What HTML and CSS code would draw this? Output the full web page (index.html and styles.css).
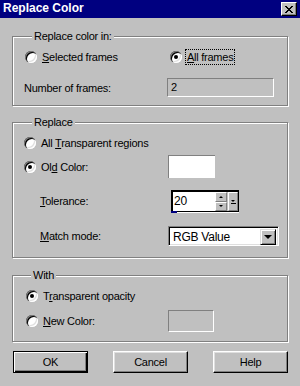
FILE: index.html
```html
<!DOCTYPE html>
<html lang="en">
<head>
    <meta charset="UTF-8">
    <meta name="viewport" content="width=device-width, initial-scale=1.0">
    <title>Replace Color</title>
    <link rel="stylesheet" href="styles.css">
</head>
<body>
    <div class="window">
        <div class="titlebar">
            <span class="title">Replace Color</span>
            <span class="close">
                <svg width="8" height="7" viewBox="0 0 8 7"><path d="M0 0h2v1h-2zM6 0h2v1h-2zM1 1h2v1h-2zM5 1h2v1h-2zM2 2h4v1h-4zM3 3h2v1h-2zM2 4h4v1h-4zM1 5h2v1h-2zM5 5h2v1h-2zM0 6h2v1h-2zM6 6h2v1h-2z" fill="#000"/></svg>
            </span>
        </div>

        <div class="dialog">
            <div class="group group-in">
                <div class="legend">Replace color in:</div>
                <div class="row row-first">
                    <label class="opt opt-wide"><span class="radio"></span><span><u>S</u>elected frames</span></label>
                    <label class="opt"><span class="radio on"></span><span class="focus"><u>A</u>ll frames</span></label>
                </div>
                <div class="row row-count">
                    <span class="label label-count">Number of frames:</span>
                    <span class="field field-count">2</span>
                </div>
            </div>

            <div class="group group-replace">
                <div class="legend">Replace</div>
                <div class="row row-first">
                    <label class="opt"><span class="radio"></span><span>All <u>T</u>ransparent regions</span></label>
                </div>
                <div class="row row-old">
                    <label class="opt opt-old"><span class="radio on"></span><span>Ol<u>d</u> Color:</span></label>
                    <span class="swatch"></span>
                </div>
                <div class="row row-tol">
                    <span class="label label-indent label-tol"><u>T</u>olerance:</span>
                    <div class="spin">
                        <span class="spin-text">20</span>
                        <span class="spin-arrows">
                            <span class="spin-btn"><i class="tri-up"></i></span>
                            <span class="spin-btn"><i class="tri-down"></i></span>
                        </span>
                        <span class="spin-drop"><i class="tri-down"></i><i class="bar"></i></span>
                        <span class="spin-mark"></span>
                    </div>
                </div>
                <div class="row row-match">
                    <span class="label label-indent label-match"><u>M</u>atch mode:</span>
                    <div class="select">
                        <span class="select-text">RGB Value</span>
                        <span class="select-btn"><i class="tri-big"></i></span>
                    </div>
                </div>
            </div>

            <div class="group group-with">
                <div class="legend">With</div>
                <div class="row row-first">
                    <label class="opt"><span class="radio on"></span><span>T<u>r</u>ansparent opacity</span></label>
                </div>
                <div class="row row-new">
                    <label class="opt opt-new"><span class="radio"></span><span><u>N</u>ew Color:</span></label>
                    <span class="field field-new"></span>
                </div>
            </div>

            <div class="buttons">
                <button class="btn default">OK</button>
                <button class="btn">Cancel</button>
                <button class="btn">Help</button>
            </div>
        </div>
    </div>
</body>
</html>
```

FILE: styles.css
```css
body {
    margin: 0;
    background: #c0c0c0;
    font-family: "Liberation Sans", Arial, sans-serif;
    font-size: 11px;
    letter-spacing: -0.25px;
    color: #000;
}
.window {
    width: 300px;
    height: 386px;
    background: #c0c0c0;
    overflow: hidden;
}
.titlebar {
    height: 18px;
    background: #000080;
    display: flex;
    align-items: flex-start;
    justify-content: space-between;
}
.title {
    color: #fff;
    font-weight: bold;
    font-size: 12px;
    letter-spacing: 0;
    line-height: 17px;
    padding-left: 3px;
}
.close {
    width: 16px;
    height: 14px;
    margin: 2px 3px 0 0;
    box-sizing: border-box;
    background: #c0c0c0;
    border-top: 1px solid #fff;
    border-left: 1px solid #fff;
    border-right: 1px solid #000;
    border-bottom: 1px solid #000;
    box-shadow: inset -1px -1px 0 #808080;
    display: flex;
    align-items: center;
    justify-content: center;
}
.dialog {
    padding: 18px 12px 0 12px;
}
.group {
    box-sizing: border-box;
    border: 1px solid #808080;
    box-shadow: inset 1px 1px 0 #fff, 1px 1px 0 #fff;
    padding-left: 12px;
}
.group-in {
    height: 70px;
}
.group-replace {
    height: 136px;
    margin-top: 16px;
    padding-left: 11px;
}
.group-with {
    height: 67px;
    margin-top: 17px;
    padding-left: 13px;
}
.legend {
    width: fit-content;
    height: 13px;
    line-height: 13px;
    margin: -7px 0 -6px 7px;
    padding: 0 2px;
    background: #c0c0c0;
}
.group-replace .legend {
    margin-left: 8px;
}
.group-with .legend {
    margin-left: 5px;
}
.row {
    display: flex;
    align-items: center;
}
.row-first {
    height: 20px;
    margin-top: 10px;
}
.row-count {
    height: 19px;
    margin-top: 11px;
}
.row-old {
    height: 23px;
    margin-top: 2px;
}
.row-tol {
    height: 22px;
    margin-top: 12px;
}
.row-match {
    height: 20px;
    margin-top: 14px;
}
.row-new {
    height: 22px;
    margin-top: 4px;
}
.opt {
    display: flex;
    align-items: center;
    gap: 5px;
}
.opt-wide {
    width: 145px;
}
.opt-old {
    width: 144px;
}
.opt-new {
    width: 142px;
}
.radio {
    width: 12px;
    height: 12px;
    border-radius: 50%;
    background: #fff;
    box-shadow: inset 1px 1px 0 #808080, inset 2px 2px 0 #000, inset -1px -1px 0 #fff, inset -2px -2px 0 #dfdfdf;
    display: flex;
    align-items: center;
    justify-content: center;
    flex-shrink: 0;
}
.radio.on::after {
    content: "";
    width: 4px;
    height: 4px;
    border-radius: 50%;
    background: #000;
}
.focus {
    outline: 1px dotted #000;
    outline-offset: 1px;
}
.label-count {
    width: 143px;
    margin-left: -1px;
}
.label-indent {
    padding-left: 16px;
    flex-shrink: 0;
}
.label-tol {
    width: 131px;
}
.label-match {
    width: 128px;
}
.field {
    box-sizing: border-box;
    border-top: 1px solid #808080;
    border-left: 1px solid #808080;
    border-right: 1px solid #fff;
    border-bottom: 1px solid #fff;
    background: #c0c0c0;
    padding-left: 3px;
    line-height: 17px;
}
.field-count {
    width: 107px;
    height: 19px;
}
.field-new {
    width: 46px;
    height: 22px;
}
.swatch {
    box-sizing: border-box;
    width: 47px;
    height: 23px;
    background: #fff;
    border-top: 1px solid #808080;
    border-left: 1px solid #808080;
}
.spin {
    position: relative;
    box-sizing: border-box;
    width: 68px;
    height: 22px;
    display: flex;
    border-top: 2px solid #000;
    border-left: 2px solid #000;
    border-right: 1px solid #000;
    border-bottom: 1px solid #000;
    box-shadow: 0 1px 0 #fff;
    background: #c0c0c0;
}
.spin-text {
    flex: 1;
    background: #fff;
    font-size: 12px;
    line-height: 19px;
    padding-left: 1px;
}
.spin-arrows {
    width: 12px;
    display: flex;
    flex-direction: column;
}
.spin-btn, .spin-drop {
    flex: 1;
    box-sizing: border-box;
    border-top: 1px solid #fff;
    border-left: 1px solid #fff;
    border-right: 1px solid #808080;
    border-bottom: 1px solid #808080;
    display: flex;
    flex-direction: column;
    align-items: center;
    justify-content: center;
}
.spin-drop {
    flex: none;
    width: 10px;
    margin-left: 1px;
    gap: 1px;
}
.tri-up, .tri-down {
    width: 0;
    height: 0;
    border-left: 2px solid transparent;
    border-right: 2px solid transparent;
}
.tri-up {
    border-bottom: 2px solid #000;
}
.tri-down {
    border-top: 2px solid #000;
}
.bar {
    width: 5px;
    height: 1px;
    background: #000;
}
.spin-mark {
    position: absolute;
    left: -2px;
    bottom: -2px;
    width: 6px;
    height: 2px;
    background: #000080;
}
.select {
    box-sizing: border-box;
    width: 111px;
    height: 20px;
    display: flex;
    background: #fff;
    border-top: 1px solid #808080;
    border-left: 1px solid #808080;
    border-right: 1px solid #fff;
    border-bottom: 1px solid #fff;
    box-shadow: inset 1px 1px 0 #000, inset -1px -1px 0 #dfdfdf;
    padding: 2px;
}
.select-text {
    flex: 1;
    font-size: 12px;
    line-height: 16px;
    padding-left: 2px;
}
.select-btn {
    box-sizing: border-box;
    width: 16px;
    height: 16px;
    background: #c0c0c0;
    border-top: 1px solid #dfdfdf;
    border-left: 1px solid #dfdfdf;
    border-right: 1px solid #000;
    border-bottom: 1px solid #000;
    box-shadow: inset 1px 1px 0 #fff, inset -1px -1px 0 #808080;
    display: flex;
    align-items: center;
    justify-content: center;
}
.tri-big {
    width: 0;
    height: 0;
    border-left: 4px solid transparent;
    border-right: 4px solid transparent;
    border-top: 4px solid #000;
}
.buttons {
    display: flex;
    justify-content: space-between;
    margin-top: 9px;
    padding-left: 1px;
}
.btn {
    box-sizing: border-box;
    width: 75px;
    height: 22px;
    padding: 0;
    font-family: "Liberation Sans", Arial, sans-serif;
    font-size: 11px;
    letter-spacing: -0.25px;
    color: #000;
    background: #c0c0c0;
    border-top: 1px solid #fff;
    border-left: 1px solid #fff;
    border-right: 1px solid #000;
    border-bottom: 1px solid #000;
    box-shadow: inset -1px -1px 0 #808080, inset 1px 1px 0 #dfdfdf;
}
.btn.default {
    border: 1px solid #000;
    box-shadow: inset 1px 1px 0 #fff, inset -1px -1px 0 #000, inset -2px -2px 0 #808080;
}
```
